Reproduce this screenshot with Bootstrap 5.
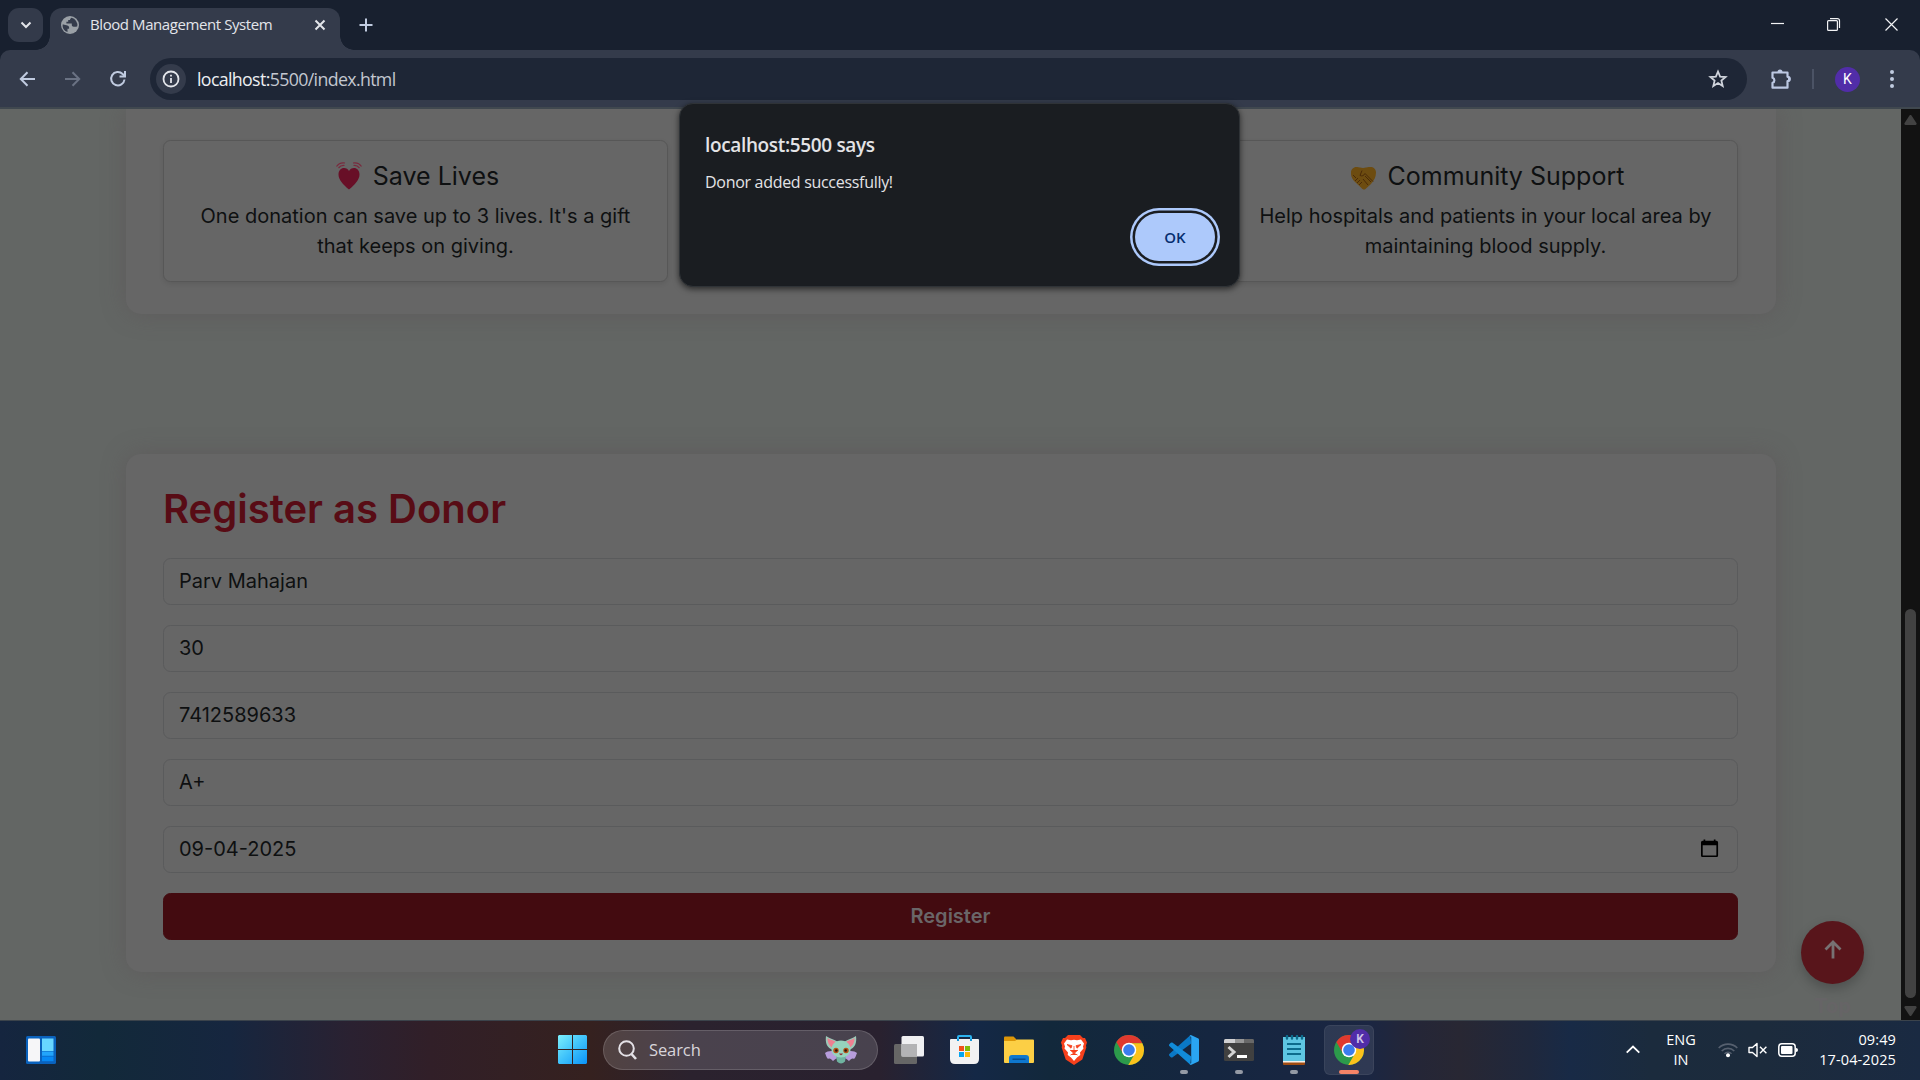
<!DOCTYPE html>
<html lang="en">
<head>
<meta charset="utf-8">
<title>Blood Management System</title>
<link href="https://cdn.jsdelivr.net/npm/bootstrap@5.3.0/dist/css/bootstrap.min.css" rel="stylesheet">
<style>
html{font-size:20px}
body{width:1920px;height:1080px;overflow:hidden;font-family:"Noto Sans","Open Sans",sans-serif;font-size:15px;line-height:20px;background:#18202f;color:#e3e5ea}
svg{display:block;flex:none}
/* browser frame */
.tabstrip{height:50px;padding:8px 0 0 8px}
.tab-search{width:35px;height:34px;border-radius:11px;background:#333a4a;margin-right:7px}
.tab-open{width:290px;height:42px;border-radius:12px 12px 0 0;background:#343b4b;padding:0 14px 8px 11px}
.tab-open::before,.tab-open::after{content:"";position:absolute;bottom:0;width:14px;height:14px}
.tab-open::before{left:-14px;background:radial-gradient(circle at 0 0,transparent 13.5px,#343b4b 14px)}
.tab-open::after{right:-14px;background:radial-gradient(circle at 100% 0,transparent 13.5px,#343b4b 14px)}
.tab-title{font-family:"Open Sans",sans-serif;font-size:15px;margin-left:11px;letter-spacing:-.42px;white-space:nowrap;position:relative;top:-1px}
.toolbar{height:59px;background:#343b4b;border-radius:10px 10px 0 0;border-bottom:2px solid #40484f;padding:8px 15px 7px 17px}
.omnibox{width:1597px;height:42px;border-radius:21px;background:#1e2636;padding:0 18px 0 6px;margin-left:21px}
.info-dot{width:30px;height:30px;background:#343b4b}
.url{font-family:"Open Sans",sans-serif;font-size:17.8px;margin-left:11px;letter-spacing:-.65px;color:#c3c7d0}
.url b{font-weight:400;color:#eceef2}
.bar-sep{width:2px;height:20px;background:#4b5365}
.profile{width:25px;height:25px;background:#512da8;font-family:Roboto,sans-serif;font-size:14px;color:#fff}
/* page under the dialog */
.viewport{height:911px}
.page-area{background:#636664;font-family:Inter,sans-serif;font-size:1rem;line-height:1.5;color:#0e1011;overflow:hidden}
.panel{width:1650px;margin:0 125px 0 126px;padding:31.25px 38px 31.25px 37px;background:#666;border-radius:15px;box-shadow:0 0 25px rgba(88,76,80,.4)}
.panel-top{border-radius:0 0 15px 15px;height:205px;margin-bottom:140px}
.row-wide{--bs-gutter-x:30px}
.benefit{background:#666;border:1px solid #575757;border-radius:7.5px;color:#0e1011;box-shadow:0 2px 5px rgba(0,0,0,.09);height:142px}
.benefit .card-body{padding:20px 15px}
.benefit h5{font-weight:400;font-size:25px;margin-bottom:10px;height:30px}
.benefit p{padding:0 5px}
.emo{width:34px;height:30px;margin-right:7px}
.panel h2{font-size:40px;font-weight:600;color:#580c15;margin-bottom:25px}
.field{background:#666!important;border:1px solid #5a5b5c;border-radius:7.5px;color:#0e1011;height:47px;padding:6.5px 15px 8.5px;margin-bottom:20px;font-size:20px}
.btn-reg,.btn-reg:hover{background:#430b10;border:1px solid #430b10;color:#6a6668;border-radius:7.5px;height:47px;font-weight:600;font-size:20px;padding:0;line-height:45px}
.to-top{position:absolute;left:1801px;top:812px;width:63px;height:63px;background:#58151b;box-shadow:0 5px 12px rgba(0,0,0,.22)}
.to-top-label{position:absolute;left:1801px;top:884px;width:63px;text-align:center;font-weight:700;font-size:20px;line-height:26px;color:#666466}
.scroll{width:19px;background:#121212;padding:6px 0 4px}
.thumb{width:11px;height:389px;border-radius:6px;background:#424242;margin-top:auto;margin-bottom:8px}
/* alert */
.alertbox{position:absolute;left:679px;top:103px;width:561px;height:184px;background:#1a1d21;border:1px solid #2f3337;border-radius:14px;box-shadow:0 2px 6px rgba(0,0,0,.6);padding:27px 24px 25px 25px;color:#e3e3e6;z-index:5}
.alertbox .a-title{font-size:19px;line-height:28px;font-weight:600;font-family:"Open Sans",sans-serif;letter-spacing:-.35px;white-space:nowrap}
.alertbox .a-msg{font-size:16px;line-height:24px;margin-top:11px;letter-spacing:-.3px;font-family:"Open Sans",sans-serif}
.ok-btn{width:80px;height:48px;border-radius:24px;background:#adc9fb;color:#062e6f;font-family:"Open Sans",sans-serif;font-size:15px;font-weight:600;box-shadow:0 0 0 2.5px #1a1d21,0 0 0 5px #adc9fb;position:absolute;left:455px;top:109px}
/* taskbar */
.taskbar{height:60px;box-shadow:inset 0 1px #3b434b;padding-left:13.5px;color:#fff;background:linear-gradient(90deg,#15253f 0,#12293a 100px,#16263f 230px,#2a2131 350px,#311f28 430px,#35211f 590px,#2b222e 690px,#29212f 880px,#142846 975px,#12283b 1050px,#152640 1210px,#1b2642 1370px,#242638 1410px,#282733 1460px,#1f283d 1530px,#182a46 1570px,#1b2b3d 1650px,#1c2b3c 1760px,#1a2a42 1920px)}
.cell{width:55px;height:60px;flex:none;position:relative;padding-bottom:1px}
.cell .pip{position:absolute;bottom:6px;width:8px;height:4px;border-radius:2px;background:#949aa5}
.tile{position:absolute;left:2.5px;top:5px;width:50px;height:50px;border-radius:6px;background:rgba(255,255,255,.09);border:1px solid rgba(255,255,255,.06)}
.cell .pip.live{width:20px;background:#f58467}
.kbadge{position:absolute;left:28.5px;top:9px;width:20px;height:20px;background:#512da8;color:#cfc4e8;font-size:12px;font-weight:600;font-family:Roboto,sans-serif}
.searchbox{width:275px;height:40px;border-radius:20px;background:rgba(255,255,255,.15);border:1px solid rgba(255,255,255,.15);margin:0 3.5px 0 3px;padding:0 19px 0 14px}
.searchbox span{font-family:"Open Sans",sans-serif;font-size:16.500px;color:#d8d5da;margin-left:12px;letter-spacing:-.1px}
.tray{font-family:"Open Sans",sans-serif;font-size:14.500px;line-height:20px;padding-right:24px;margin-top:-1px}
.clock{width:80px;letter-spacing:.12px;white-space:nowrap;margin-left:18px}
</style>
<script src="https://cdn.jsdelivr.net/npm/bootstrap@5.3.0/dist/js/bootstrap.bundle.min.js"></script>
</head>
<body class="d-flex flex-column position-relative">

<svg width="0" height="0" class="position-absolute">
  <defs>
    <symbol id="chrome" viewBox="0 0 48 48">
      <circle cx="24" cy="24" r="24" fill="#2c9a4b"/>
      <path d="M45.33 13H24L14.47 29.5 3.8 11.03A24 24 0 0 1 45.33 13Z" fill="#e0392f"/>
      <path d="M45.33 13H24L33.53 29.5 22.87 47.97A24 24 0 0 0 45.33 13Z" fill="#fbc21c"/>
      <circle cx="24" cy="24" r="11.6" fill="#fff"/><circle cx="24" cy="24" r="9.3" fill="#3b7ded"/>
    </symbol>
  </defs>
</svg>

<header>
  <div class="tabstrip d-flex">
    <div class="tab-search d-flex align-items-center justify-content-center">
      <svg width="12" height="8" viewBox="0 0 12 8" fill="none" stroke="#e3e5ea" stroke-width="2"><path d="M1.500 1.500 6 6l4.500-4.500"/></svg>
    </div>
    <div class="tab-open d-flex align-items-center position-relative">
      <svg width="18" height="18" viewBox="0 0 18 18"><circle cx="9" cy="9" r="9" fill="#9aa0a6"/><path d="M10.500 1.800c-.8.600-1.500 1-1.500 2.200H7.200v1.800H5.400V7.600h5.400v1.500c0 1 .9 1.700 1.800 1.700h2.600a1.500 1.500 0 0 0 1.100-.5A7.500 7.500 0 0 0 10.500 1.800ZM1.600 8.500c1.200 0 2 .1 4 .8 1 .4 2.500.6 2.500 2v1.500h-1.600v3.300A7.300 7.300 0 0 1 1.600 8.500Z" fill="#343b4b"/></svg>
      <span class="tab-title">Blood Management System</span>
      <svg class="ms-auto" width="12" height="12" viewBox="0 0 12 12" stroke="#e3e5ea" stroke-width="2"><path d="M1.500 1.500l9 9M10.500 1.500l-9 9"/></svg>
    </div>
    <svg style="margin:10px 0 0 18.500px" width="14" height="14" viewBox="0 0 14 14" stroke="#c0cbe0" stroke-width="2"><path d="M7 .5v13M.5 7h13"/></svg>
    <svg class="ms-auto" style="margin:9px 21px 0 0" width="128" height="15" viewBox="0 0 128 15" fill="none" stroke="#f2f3f5" stroke-width="1.200">
      <path d="M0 6.500h13"/><rect x="56.600" y="3.600" width="9.800" height="9.800" rx="1"/><path d="M59 1.600h7.500a2 2 0 0 1 2 2V11"/><path d="M114.500 1.500l12 12M126.500 1.500l-12 12"/></svg>
  </div>
  <div class="toolbar d-flex align-items-center">
    <svg width="22" height="22" viewBox="0 0 22 22" fill="none" stroke="#c0cbe0" stroke-width="2"><path d="M18 11H4M10.500 4.300 3.800 11l6.700 6.700"/></svg>
    <svg style="margin-left:22px" width="22" height="22" viewBox="0 0 22 22" fill="none" stroke="#6a7283" stroke-width="2"><path d="M4 11h14M11.500 4.300 18.200 11l-6.700 6.700"/></svg>
    <svg style="margin-left:24px" width="22" height="22" viewBox="0 0 22 22" fill="none" stroke="#c0cbe0" stroke-width="2"><path d="M17.500 11.500A6.700 6.700 0 1 1 15.600 6l2 2"/><path d="M18 3v5.500h-5.500"/></svg>
    <div class="omnibox d-flex align-items-center">
      <div class="info-dot rounded-circle d-flex align-items-center justify-content-center">
        <svg width="18" height="18" viewBox="0 0 18 18" fill="none" stroke="#e3e5ea" stroke-width="1.800"><circle cx="9" cy="9" r="7.500"/><path d="M9 8v5M9 4.800v1.800"/></svg>
      </div>
      <span class="url"><b>localhost:</b>5500/index.html</span>
      <svg class="ms-auto" width="22" height="22" viewBox="0 0 22 22" fill="none" stroke="#d0d4dc" stroke-width="1.800"><path d="M11 3.500l2.100 5.100 5.500.4-4.200 3.600 1.300 5.400L11 15.100 6.300 18l1.300-5.400L3.400 9l5.500-.4z"/></svg>
    </div>
    <svg style="margin-left:22px" width="23" height="23" viewBox="0 0 23 23"><path d="M3.500 4.500h15v4.300a2.200 2.200 0 0 1 0 4.400v6.500h-15v-5a2.600 2.600 0 0 0 0-5z" fill="none" stroke="#bcc8e2" stroke-width="2.200" stroke-linejoin="round"/><path d="M8.500 4a2.500 2.500 0 0 1 5 0zM19 8.500a2.500 2.500 0 0 1 0 5z" fill="#bcc8e2"/></svg>
    <div class="bar-sep" style="margin-left:20px"></div>
    <div class="profile rounded-circle d-flex align-items-center justify-content-center" style="margin-left:21px">K</div>
    <svg style="margin-left:29px" width="6" height="20" viewBox="0 0 6 20" fill="#c0cbe0"><circle cx="3" cy="3" r="2"/><circle cx="3" cy="10" r="2"/><circle cx="3" cy="17" r="2"/></svg>
  </div>
</header>

<div class="viewport d-flex position-relative">
  <main class="page-area flex-grow-1">
    <section class="panel panel-top">
      <div class="row row-wide text-center">
        <div class="col-4">
          <div class="card benefit"><div class="card-body">
            <h5 class="d-flex justify-content-center align-items-center">
              <svg class="emo" viewBox="0 0 34 30"><path d="M17 28.500C11 23.500 6.500 18.500 6.500 13.500 6.500 9.500 9 7 12 7c2.300 0 4 1.200 5 3 1-1.800 2.700-3 5-3 3 0 5.500 2.500 5.500 6.500C27.500 18.500 23 23.500 17 28.500Z" fill="#680f27"/><g fill="none" stroke="#7a2a3e" stroke-width="1.200"><path d="M4.500 5.500Q7.500 1 13 2M6.500 7Q9 4 12.500 4.500M29.500 5.500Q26.500 1 21 2M27.500 7Q25 4 21.500 4.500"/></g></svg>Save Lives</h5>
            <p class="mb-0">One donation can save up to 3 lives. It's a gift that keeps on giving.</p>
          </div></div>
        </div>
        <div class="col-4 offset-4">
          <div class="card benefit"><div class="card-body">
            <h5 class="d-flex justify-content-center align-items-center">
              <svg class="emo" viewBox="0 0 34 30"><path d="M4 11C4.300 8 7 5.500 10 6l6 1 6-1c4-.5 7 1.500 7 5.500 0 4.500-2 8-5 11.500L18.500 28c-1.500 1-3 .5-4-1L7 20c-2.500-3-3.300-6-3-9Z" fill="#6d4c10"/><path d="M15 9.500l-2 5c2 1 4 0 5-2l8 8M18 15l6 6M16 18l5 6M6 14l3 3m-1 3 3-3m-1 5 3-3m-1 5 3-3" fill="none" stroke="#4a2a08" stroke-width="1"/></svg>Community Support</h5>
            <p class="mb-0 px-0">Help hospitals and patients in your local area by maintaining blood supply.</p>
          </div></div>
        </div>
      </div>
    </section>
    <section class="panel">
      <h2>Register as Donor</h2>
      <div class="form-control field">Parv Mahajan</div>
      <div class="form-control field">30</div>
      <div class="form-control field">7412589633</div>
      <div class="form-control field">A+</div>
      <div class="form-control field d-flex align-items-center justify-content-between">09-04-2025
        <svg width="25" height="25" viewBox="0 0 24 24" fill="#000"><path d="M20 3h-1V1.500h-2V3H7V1.500H5V3H4c-1.100 0-2 .9-2 2v15c0 1.100.9 2 2 2h16c1.100 0 2-.9 2-2V5c0-1.100-.9-2-2-2zm0 17H4V8h16v12z" transform="translate(2.200 2.200) scale(.82)"/></svg>
      </div>
      <button class="btn btn-reg w-100 d-block">Register</button>
    </section>
    <div class="to-top rounded-circle d-flex justify-content-center" style="padding-top:19px">
      <svg width="18" height="19" viewBox="0 0 18 19" fill="none" stroke="#777173" stroke-width="2.800"><path d="M9 18.500V2M1.500 9.500 9 2l7.500 7.500"/></svg>
    </div>
    <div class="to-top-label">Top</div>
  </main>
  <div class="scroll d-flex flex-column align-items-center">
    <svg width="13" height="10" viewBox="0 0 13 10" fill="#424242"><path d="M5.500.6a1.200 1.200 0 0 1 2 0L12.400 8a1.200 1.200 0 0 1-1 1.900H1.600A1.200 1.200 0 0 1 .6 8z"/></svg>
    <div class="thumb"></div>
    <svg width="13" height="10" viewBox="0 0 13 10" fill="#424242"><path d="M5.500 9.400a1.200 1.200 0 0 0 2 0L12.400 2a1.200 1.200 0 0 0-1-1.900H1.600A1.200 1.200 0 0 0 .6 2z"/></svg>
  </div>
</div>

<div class="alertbox">
  <div class="a-title">localhost:5500 says</div>
  <div class="a-msg">Donor added successfully!</div>
  <div class="ok-btn d-flex align-items-center justify-content-center">OK</div>
</div>

<footer class="taskbar d-flex align-items-center">
  <div class="cell d-flex align-items-center justify-content-center">
    <svg width="30" height="28" viewBox="0 0 30 28"><rect width="30" height="28" rx="1.500" fill="#0a62bd"/><rect x="2" y="2.500" width="12" height="23" rx="1" fill="#f6f6f8"/><path d="M16 2.500h11.500V15H16z" fill="#68d6ff"/><path d="M16 15.500h11.500v4.300H16z" fill="#22a5fb"/><path d="M16 20.500h11.500v4.700H16z" fill="#0788f3"/></svg>
  </div>
  <div class="cell d-flex align-items-center justify-content-center" style="margin-left:476.500px">
    <svg width="29" height="29" viewBox="0 0 29 29"><defs><linearGradient id="win" x1="0" y1="0" x2="1" y2="1"><stop offset="0" stop-color="#7df0fc"/><stop offset=".5" stop-color="#3fc2fb"/><stop offset="1" stop-color="#0a93f8"/></linearGradient></defs><path d="M1 0h13v14H0V1zM15 0h13l1 1v13H15zM0 15h14v14H1l-1-1zM15 15h14v13l-1 1H15z" fill="url(#win)"/></svg>
  </div>
  <div class="searchbox d-flex align-items-center">
    <svg width="19" height="20" viewBox="0 0 19 20" fill="none" stroke="#e4e1e6" stroke-width="2"><circle cx="8.500" cy="8.500" r="7.300"/><path d="M13.500 14l4.500 5" stroke-width="2.600"/></svg>
    <span>Search</span>
    <svg class="ms-auto" width="34" height="28" viewBox="0 0 34 28">
      <path d="M13 16C8 14 3 15 1 17c1 2 1 4 3 6 2-1 3 0 5 2 2-2 4-3 5-3zM21 16c5-2 10-1 12 1-1 2-1 4-3 6-2-1-3 0-5 2-2-2-4-3-5-3z" fill="#b79ddc"/>
      <path d="M2 0C1 7 3 12 9 14l5-8C10 3 6 3 2 0zM32 0c1 7-1 12-7 14l-5-8c4-3 8-3 12-6z" fill="#9cc9b8"/>
      <path d="M3.500 2c0 5 2 8 5.500 10l3-6C9 4 6 4 3.500 2zM30.500 2c0 5-2 8-5.500 10l-3-6c3-2 6-2 8.500-4z" fill="#ee8091"/>
      <path d="M12 19h10l-1 6.500q-4 4-8 0z" fill="#6fb3a0"/>
      <path d="M17 4.500c6 0 9.500 4 9.500 9s-4.500 8-9.500 8-9.500-3-9.500-8 3.500-9 9.500-9z" fill="#96d4bd"/>
      <circle cx="12" cy="14.500" r="2.700" fill="#b35217"/><circle cx="22" cy="14.500" r="2.700" fill="#b35217"/><circle cx="12.300" cy="14.500" r="1.300" fill="#26160f"/><circle cx="21.700" cy="14.500" r="1.300" fill="#26160f"/><path d="M15 17.500h4q-2 3.500-4 0z" fill="#92303a"/></svg>
  </div>
  <div class="cell d-flex align-items-center justify-content-center">
    <svg width="30" height="28" viewBox="0 0 30 28"><rect y="8" width="23" height="20" rx="1.500" fill="#666"/><rect x="7.500" width="22.500" height="20.500" rx="1.500" fill="#f0f0f2"/><path d="M7.500 8H23v12.500H7.500z" fill="#b3b3b5"/></svg>
  </div>
  <div class="cell d-flex align-items-center justify-content-center">
    <svg width="29" height="29" viewBox="0 0 29 29"><path d="M8 6V2q0-1 1-1h11q1 0 1 1v4" fill="none" stroke="#2cb3f0" stroke-width="2"/><path d="M0 5q0-1 1-1h27q1 0 1 1v19q0 5-5 5H5q-5 0-5-5z" fill="#f2f2f3"/><path d="M9 11h5v5H9z" fill="#f1511b"/><path d="M15 11h5v5h-5z" fill="#80bb0a"/><path d="M9 17h5v5H9z" fill="#06a5f0"/><path d="M15 17h5v5h-5z" fill="#fbb80a"/><path d="M7 4h2v2H7zM20 4h2v2h-2z" fill="#1597da"/></svg>
  </div>
  <div class="cell d-flex align-items-center justify-content-center">
    <svg width="30" height="27" viewBox="0 0 30 27"><path d="M0 1.500Q0 .5 1 .5h8.500L13 4v4H0z" fill="#dd9708"/><path d="M0 5h11l2-1.500h16q1 0 1 1V26q0 1-1 1H1q-1 0-1-1z" fill="#fccf45"/><path d="M5 27v-5q0-3 3-3h14q3 0 3 3v5z" fill="#0f77ce"/><path d="M8.500 22.500h13v1.500h-13z" fill="#094d8f"/></svg>
  </div>
  <div class="cell d-flex align-items-center justify-content-center">
    <svg width="26" height="30" viewBox="0 0 26 30"><path d="M7 0h12l3 3h2l2 4.500-1 3 .3 2-4 12L13 30 4.700 24.500l-4-12 .3-2L0 7.500 2 3h2z" fill="#f6401c"/><path d="M6 4.500l4 .8 3-.5 3 .5 4-.8 3 4-1 3 .5 2-3.500 4 .3 2.500-3.300 2.500L13 26l-3-3.500L6.700 20l.3-2.500-3.500-4 .5-2-1-3z" fill="#fff"/><path d="M6 9.500l5 1.200-1 2.500zM20 9.500l-5 1.200 1 2.500zM13 11v5m-4-1 3 2.500 1 1 1-1 3-2.500M9.500 20l3.500-1.800 3.500 1.800" fill="#f6401c" stroke="#f6401c" stroke-width=".8"/></svg>
  </div>
  <div class="cell d-flex align-items-center justify-content-center"><svg width="30" height="30"><use href="#chrome"/></svg></div>
  <div class="cell d-flex align-items-center justify-content-center">
    <svg width="30" height="30" viewBox="0 0 100 100"><path d="M71 1 74 28 11 75Q8 76 6 74L1 69Q-1 66 1 63z" fill="#0a78c6"/><path d="M71 99 74 72 11 25Q8 24 6 26L1 31Q-1 34 1 37z" fill="#118bd8"/><path d="M73 0 98 12Q100 14 100 16V84Q100 86 98 88L73 100Q69 99 69 97L74 93V7L69 3Q70 0 73 0Z" fill="#2aa5f2"/></svg><i class="pip"></i>
  </div>
  <div class="cell d-flex align-items-center justify-content-center">
    <svg width="30" height="22" viewBox="0 0 30 22"><rect width="30" height="22" rx="1.500" fill="#404040"/><path d="M0 4V1.500Q0 0 1.500 0H11v4z" fill="#d0d0d2"/><path d="M11 0h9v4h-9z" fill="#969696"/><path d="M20 0h8.500Q30 0 30 1.500V4H20z" fill="#686868"/><path d="M4.500 8l5.500 5-5.500 5" fill="none" stroke="#d4d4d4" stroke-width="3"/><path d="M13 16h10v3H13z" fill="#fff"/></svg><i class="pip"></i>
  </div>
  <div class="cell d-flex align-items-center justify-content-center">
    <svg width="22" height="30" viewBox="0 0 22 30"><path d="M0 25h22v4q0 1-1 1H1q-1 0-1-1z" fill="#a04c12"/><path d="M0 25h22v2.500H0z" fill="#f4f0ea"/><path d="M0 2h22v24H0z" fill="#5ec6e2"/><path d="M4 9h14M4 14h14M4 19h14" stroke="#0d6c8c" stroke-width="1.800"/><path d="M4 1v2.500M9 1v2.500M14 1v2.500M19 1v2.500" stroke="#0d6c8c" stroke-width="2.400" stroke-linecap="round"/></svg><i class="pip"></i>
  </div>
  <div class="cell d-flex align-items-center justify-content-center">
    <div class="tile"></div><svg class="position-relative" width="30" height="30"><use href="#chrome"/></svg>
    <div class="kbadge rounded-circle d-flex align-items-center justify-content-center">K</div><i class="pip live"></i>
  </div>
  <div class="tray d-flex align-items-center ms-auto">
    <svg width="14" height="9" viewBox="0 0 14 9" fill="none" stroke="#fff" stroke-width="1.800"><path d="M.7 7.700 7 1.500l6.300 6.200"/></svg>
    <div class="text-center" style="margin-left:26px;width:30px">ENG<br>IN</div>
    <svg style="margin-left:22px" width="20" height="17" viewBox="0 0 20 17" fill="none" stroke="#56606f" stroke-width="1.600"><path d="M.7 7a13 13 0 0 1 18.600 0M3.700 10a8.900 8.900 0 0 1 12.600 0M6.500 12.700a5 5 0 0 1 7 0"/><circle cx="10" cy="14.200" r="2" fill="#fff" stroke="none"/></svg>
    <svg style="margin-left:10px" width="20" height="16" viewBox="0 0 20 16" fill="none" stroke="#fff" stroke-width="1.400"><path d="M1 5.500v5h3.500L9 14.500v-13L4.500 5.500z" stroke-linejoin="round"/><path d="M12 4.800l6.400 6.400M18.400 4.800 12 11.200"/></svg>
    <svg style="margin-left:10px" width="20" height="14" viewBox="0 0 20 14"><rect x=".8" y=".8" width="16.400" height="12.400" rx="3" fill="none" stroke="#fff" stroke-width="1.500"/><rect x="3" y="3" width="11.500" height="8" rx="1" fill="#fff"/><path d="M18 5q2 0 2 2t-2 2z" fill="#fff"/></svg>
    <div class="text-end clock">09:49<br>17-04-2025</div>
  </div>
</footer>
</body>
</html>
